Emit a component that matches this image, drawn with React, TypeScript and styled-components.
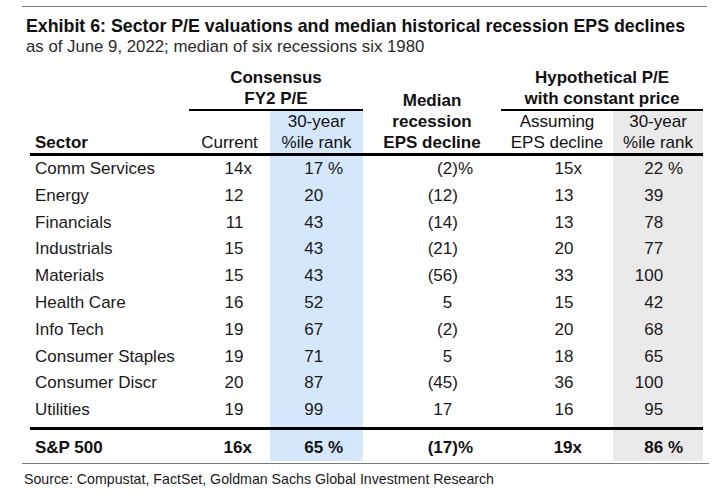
import React from "react";
import styled, { createGlobalStyle } from "styled-components";

type Shade = "blue" | "gray" | undefined;

const shadeColor = (s: Shade) =>
  s === "blue" ? "#d5e8fb" : s === "gray" ? "#eaeaea" : "transparent";

const GlobalStyle = createGlobalStyle`
  body {
    margin: 0;
    background: #fff;
    font-family: "Liberation Sans", Arial, sans-serif;
    color: #111;
  }
`;

const Page = styled.div`
  width: 687px;
  padding: 6px 0 0 22px;
`;

const Rule = styled.div<{ $w: number }>`
  width: ${(p) => p.$w}px;
  height: 1px;
  background: #7a7a7a;
`;

const Title = styled.h1`
  margin: 8.4px 0 0 4px;
  font-size: 17.8px;
  line-height: 22px;
  font-weight: bold;
  color: #111;
  white-space: nowrap;
`;

const Subtitle = styled.p`
  margin: 0 0 0 4px;
  font-size: 16.8px;
  line-height: 20px;
  color: #2a2a2a;
`;

const Table = styled.table`
  margin: 9.6px 0 0 8px;
  width: 673px;
  table-layout: fixed;
  border-collapse: separate;
  border-spacing: 0;
  font-size: 17px;
  color: #1a1a1a;
`;

const GroupHead = styled.th<{ $line?: boolean }>`
  padding: 0;
  line-height: 21px;
  text-align: center;
  vertical-align: bottom;
  font-weight: bold;
  color: #111;
  border-bottom: ${(p) => (p.$line ? "2px solid #000" : "none")};
`;

const ColHead = styled.th<{ $shade?: Shade; $bold?: boolean; $left?: boolean }>`
  padding: 0 0 0 ${(p) => (p.$left ? "5px" : "0")};
  line-height: 21px;
  text-align: ${(p) => (p.$left ? "left" : "center")};
  vertical-align: bottom;
  font-weight: ${(p) => (p.$bold ? "bold" : "normal")};
  color: #111;
  background: ${(p) => shadeColor(p.$shade)};
  border-bottom: 3px solid #000;
  white-space: nowrap;
`;

const Row = styled.tr`
  &:last-child td {
    padding-bottom: 3px;
  }
`;

const TotalRow = styled.tr`
  td {
    font-weight: bold;
    line-height: 19px;
    padding-top: 8px;
    padding-bottom: 4px;
    border-top: 3px solid #000;
    color: #111;
  }
`;

const SectorCell = styled.td`
  padding: 0 0 0 5px;
  line-height: 26.8px;
  text-align: left;
  white-space: nowrap;
`;

const NumCell = styled.td<{ $shade?: Shade; $pr: number }>`
  padding: 0 ${(p) => p.$pr}px 0 0;
  line-height: 26.8px;
  text-align: right;
  white-space: nowrap;
  background: ${(p) => shadeColor(p.$shade)};
`;

const Suffix = styled.span<{ $hidden?: boolean }>`
  white-space: pre;
  visibility: ${(p) => (p.$hidden ? "hidden" : "visible")};
`;

const Source = styled.p`
  margin: 7.5px 0 0 2px;
  font-size: 14.2px;
  line-height: 17px;
  color: #1a1a1a;
`;

type Line = [string, number, number, number, number, number];

const rows: Line[] = [
  ["Comm Services", 14, 17, -2, 15, 22],
  ["Energy", 12, 20, -12, 13, 39],
  ["Financials", 11, 43, -14, 13, 78],
  ["Industrials", 15, 43, -21, 20, 77],
  ["Materials", 15, 43, -56, 33, 100],
  ["Health Care", 16, 52, 5, 15, 42],
  ["Info Tech", 19, 67, -2, 20, 68],
  ["Consumer Staples", 19, 71, 5, 18, 65],
  ["Consumer Discr", 20, 87, -45, 36, 100],
  ["Utilities", 19, 99, 17, 16, 95],
];

const total: Line = ["S&P 500", 16, 65, -17, 19, 86];

const Cells = ({ line, units }: { line: Line; units: boolean }) => {
  const [name, cur, rank, eps, hyp, hypRank] = line;
  const hide = !units;
  return (
    <>
      <SectorCell>{name}</SectorCell>
      <NumCell $pr={18}>
        {cur}
        <Suffix $hidden={hide}>x</Suffix>
      </NumCell>
      <NumCell $pr={20} $shade="blue">
        {rank}
        <Suffix $hidden={hide}> %</Suffix>
      </NumCell>
      <NumCell $pr={28}>
        {eps < 0 ? `(${-eps})` : eps}
        {eps >= 0 && <Suffix $hidden>)</Suffix>}
        <Suffix $hidden={hide}>%</Suffix>
      </NumCell>
      <NumCell $pr={31}>
        {hyp}
        <Suffix $hidden={hide}>x</Suffix>
      </NumCell>
      <NumCell $pr={20} $shade="gray">
        {hypRank}
        <Suffix $hidden={hide}> %</Suffix>
      </NumCell>
    </>
  );
};

const App = () => {
  return (
    <Page>
      <GlobalStyle />
      <Rule $w={685} />
      <Title>Exhibit 6: Sector P/E valuations and median historical recession EPS declines</Title>
      <Subtitle>as of June 9, 2022; median of six recessions six 1980</Subtitle>
      <Table>
        <colgroup>
          <col style={{ width: 159 }} />
          <col style={{ width: 81 }} />
          <col style={{ width: 93 }} />
          <col style={{ width: 138 }} />
          <col style={{ width: 112 }} />
          <col style={{ width: 90 }} />
        </colgroup>
        <thead>
          <tr>
            <GroupHead />
            <GroupHead colSpan={2} $line>
              Consensus
              <br />
              FY2 P/E
            </GroupHead>
            <ColHead rowSpan={2} $bold>
              Median
              <br />
              recession
              <br />
              EPS decline
            </ColHead>
            <GroupHead colSpan={2} $line>
              Hypothetical P/E
              <br />
              with constant price
            </GroupHead>
          </tr>
          <tr>
            <ColHead $bold $left>
              Sector
            </ColHead>
            <ColHead>Current</ColHead>
            <ColHead $shade="blue">
              30-year
              <br />
              %ile rank
            </ColHead>
            <ColHead>
              Assuming
              <br />
              EPS decline
            </ColHead>
            <ColHead $shade="gray">
              30-year
              <br />
              %ile rank
            </ColHead>
          </tr>
        </thead>
        <tbody>
          {rows.map((r, i) => (
            <Row key={r[0]}>
              <Cells line={r} units={i === 0} />
            </Row>
          ))}
        </tbody>
        <tfoot>
          <TotalRow>
            <Cells line={total} units />
          </TotalRow>
        </tfoot>
      </Table>
      <Rule $w={687} style={{ marginTop: 1.6 }} />
      <Source>Source: Compustat, FactSet, Goldman Sachs Global Investment Research</Source>
    </Page>
  );
};

export default App;
